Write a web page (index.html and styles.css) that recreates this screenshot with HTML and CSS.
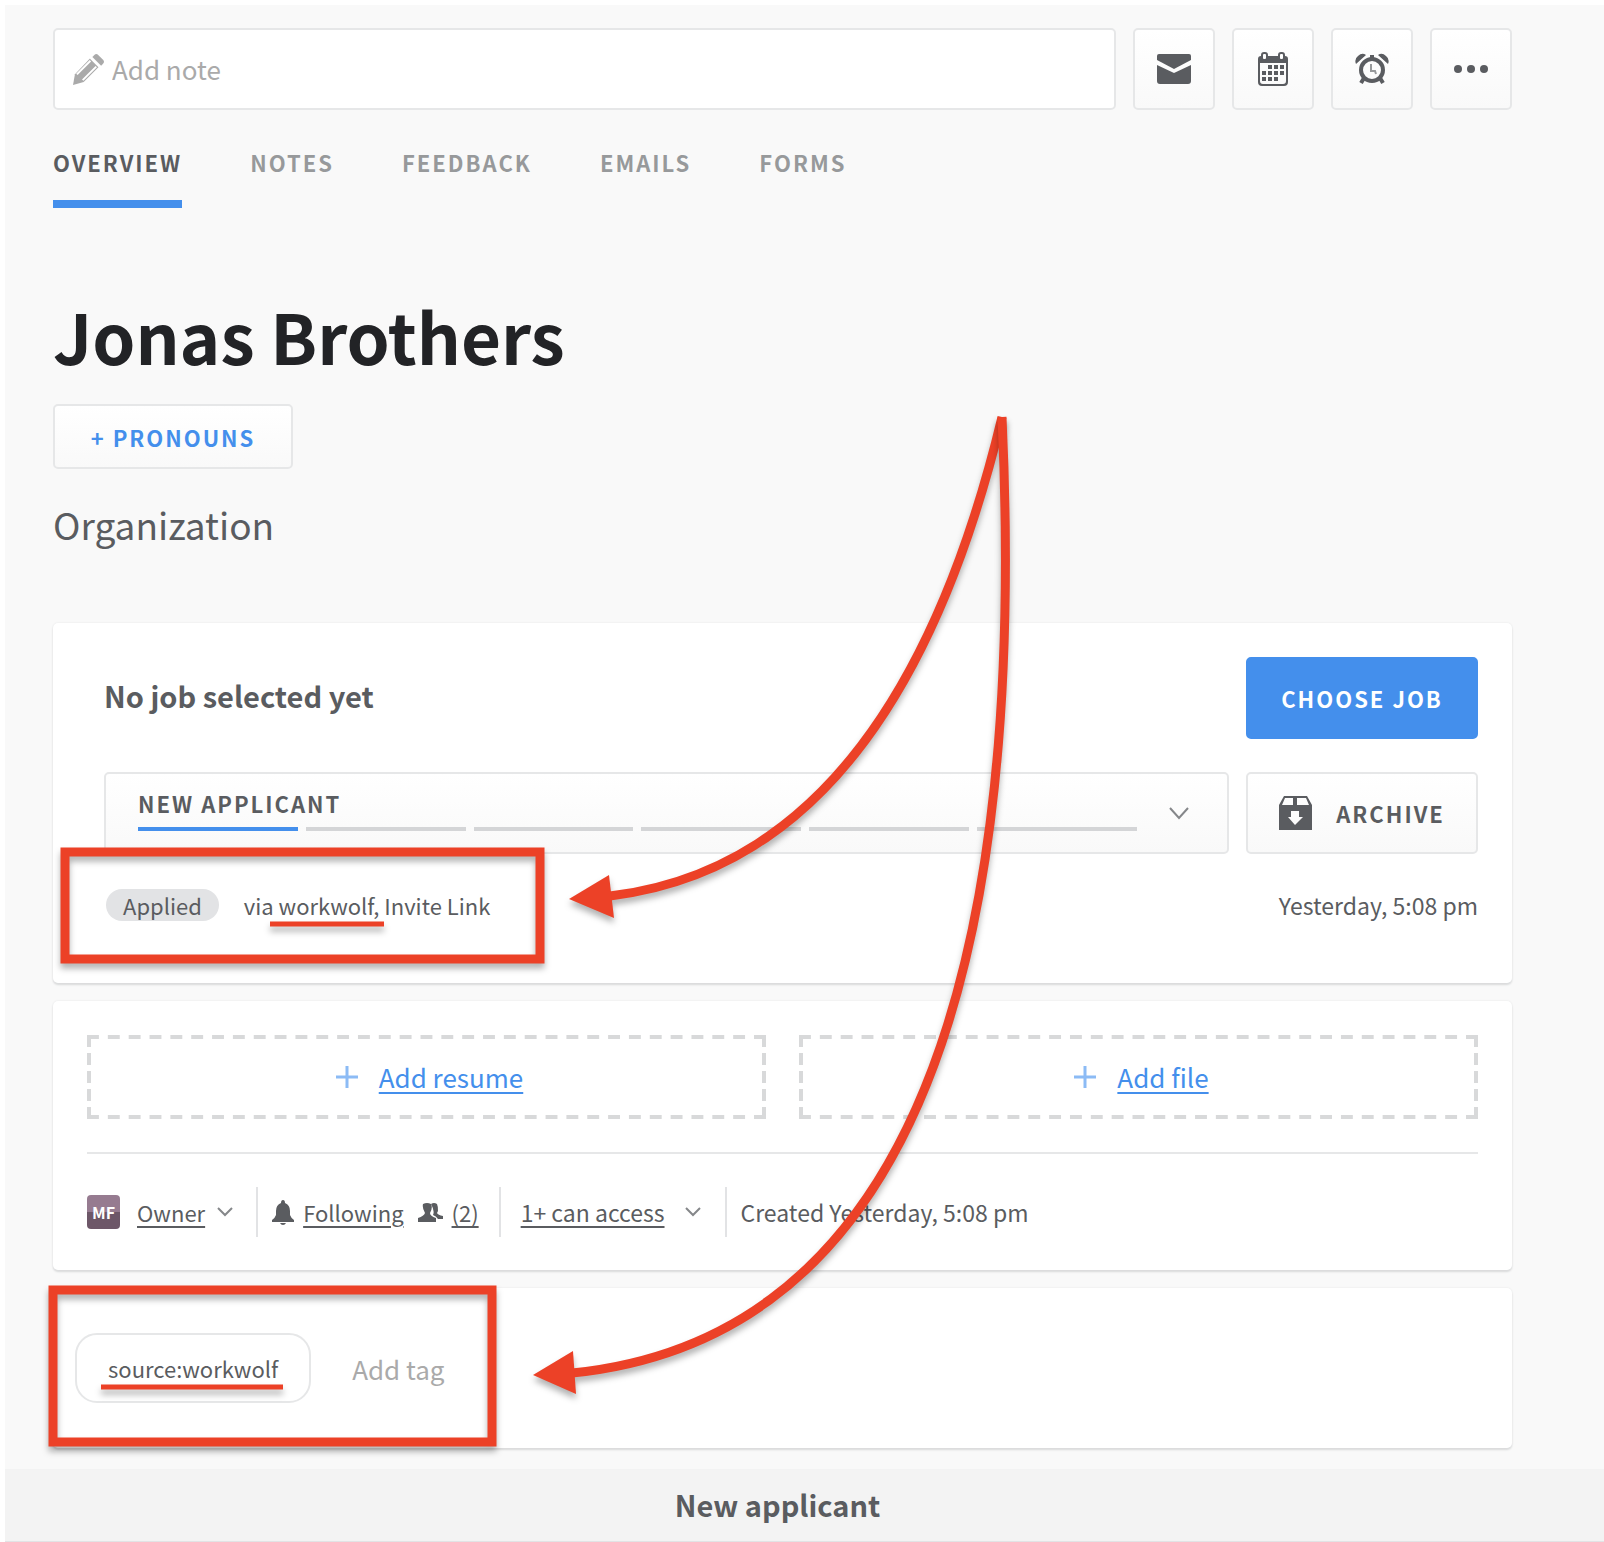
FILE: index.html
```html
<!DOCTYPE html>
<html lang="en">
<head>
    <meta charset="UTF-8">
    <meta name="viewport" content="width=device-width, initial-scale=1.0">
    <title>Jonas Brothers - Candidate Profile</title>
    <link rel="stylesheet" href="styles.css">
</head>
<body>
    <div class="page">
        <main class="profile">
            <div class="toolbar">
                <label class="note">
                    <svg class="pencil" viewBox="0 0 32 32" aria-hidden="true">
                        <path d="M0 32 L2 21 L18 4 L27 13 L11 29 Z" fill="#aaa"/>
                        <path d="M4 21 L18 7 M10 27 L24 13" stroke="#fff" stroke-width="2"/>
                        <path d="M18 4 L27 13" stroke="#fff" stroke-width="2"/>
                        <path d="M20 3 L22 1 Q24 -1 26 1 L31 6 Q33 8 31 10 L29 12 Z" fill="#aaa"/>
                    </svg>
                    <input type="text" placeholder="Add note" aria-label="Add note">
                </label>
                <button class="btn icon-btn" aria-label="Email">
                    <svg width="34" height="30" viewBox="0 0 34 30">
                        <path d="M0 2 Q0 0 2 0 H32 Q34 0 34 2 V6 L17 15 L0 6 Z"/>
                        <path d="M0 11 L17 19 L34 11 V27 Q34 30 31 30 H3 Q0 30 0 27 Z"/>
                    </svg>
                </button>
                <button class="btn icon-btn" aria-label="Calendar">
                    <svg width="30" height="34" viewBox="0 0 30 34">
                        <path fill-rule="evenodd" d="M3 4 H27 Q30 4 30 7 V30 Q30 34 26 34 H4 Q0 34 0 30 V7 Q0 4 3 4 Z M2 11 V29 Q2 32 5 32 H25 Q28 32 28 29 V11 Z"/>
                        <rect x="4" y="1" width="5" height="7" rx="2" fill="#fff" stroke="#5a5c60" stroke-width="2"/>
                        <rect x="21" y="1" width="5" height="7" rx="2" fill="#fff" stroke="#5a5c60" stroke-width="2"/>
                        <path d="M10 13h4v4h-4z M16 13h4v4h-4z M22 13h4v4h-4z M4 19h4v4h-4z M10 19h4v4h-4z M16 19h4v4h-4z M22 19h4v4h-4z M4 25h4v4h-4z M10 25h4v4h-4z M16 25h4v4h-4z"/>
                    </svg>
                </button>
                <button class="btn icon-btn" aria-label="Reminder">
                    <svg width="34" height="32" viewBox="0 0 34 32">
                        <circle cx="17" cy="17" r="11" fill="none" stroke="#5a5c60" stroke-width="4"/>
                        <path d="M1 11 Q-1 6 3 3 Q7 -1 11 2 Z M33 11 Q35 6 31 3 Q27 -1 23 2 Z M15 5 V2 H19 V5 Z"/>
                        <path d="M9 25 L6 30 M25 25 L28 30" stroke="#5a5c60" stroke-width="4"/>
                        <path d="M16 11 V18 H20 L21 21" fill="none" stroke="#97999b" stroke-width="2"/>
                    </svg>
                </button>
                <button class="btn icon-btn" aria-label="More">
                    <svg width="34" height="10" viewBox="0 0 34 10">
                        <circle cx="4" cy="5" r="4"/>
                        <circle cx="17" cy="5" r="4"/>
                        <circle cx="30" cy="5" r="4"/>
                    </svg>
                </button>
            </div>

            <nav class="tabs">
                <a href="#" class="active">OVERVIEW</a>
                <a href="#">NOTES</a>
                <a href="#">FEEDBACK</a>
                <a href="#">EMAILS</a>
                <a href="#">FORMS</a>
            </nav>

            <header class="person">
                <h1>Jonas Brothers</h1>
                <button class="btn pronouns">+ PRONOUNS</button>
                <p class="organization">Organization</p>
            </header>

            <section class="card job">
                <div class="job-row">
                    <h2>No job selected yet</h2>
                    <button class="btn primary">CHOOSE JOB</button>
                </div>
                <div class="job-row">
                    <button class="btn stage">
                        <span class="stage-main">
                            <span class="stage-name">NEW APPLICANT</span>
                            <span class="steps">
                                <span class="step done"></span>
                                <span class="step"></span>
                                <span class="step"></span>
                                <span class="step"></span>
                                <span class="step"></span>
                                <span class="step"></span>
                            </span>
                        </span>
                        <svg class="chevron" width="20" height="13" viewBox="0 0 20 13"><path d="M1 1 L10 11 L19 1"/></svg>
                    </button>
                    <button class="btn archive">
                        <svg width="33" height="34" viewBox="0 0 33 34">
                            <path fill-rule="evenodd" d="M5 0 H28 L33 9 V34 H0 V9 Z M6 2 L3 9 H14 V2 Z M18 2 V9 H30 L27 2 Z M12 15 V21 H9 L16 29 L24 21 H20 V15 Z"/>
                        </svg>
                        ARCHIVE
                    </button>
                </div>
                <div class="source-row">
                    <span class="pill">Applied</span>
                    <span>via workwolf, Invite Link</span>
                    <time>Yesterday, 5:08 pm</time>
                </div>
            </section>

            <section class="card files">
                <div class="drops">
                    <div class="drop">
                        <svg width="22" height="22" viewBox="0 0 22 22"><path d="M11 0 V22 M0 11 H22"/></svg>
                        <a href="#">Add resume</a>
                    </div>
                    <div class="drop">
                        <svg width="22" height="22" viewBox="0 0 22 22"><path d="M11 0 V22 M0 11 H22"/></svg>
                        <a href="#">Add file</a>
                    </div>
                </div>
                <div class="meta">
                    <div class="meta-item owner">
                        <span class="avatar">MF</span>
                        <a href="#">Owner</a>
                        <svg class="chevron" width="16" height="10" viewBox="0 0 16 10"><path d="M1 1 L8 8 L15 1"/></svg>
                    </div>
                    <div class="meta-item followers">
                        <svg width="22" height="25" viewBox="0 0 22 25">
                            <path d="M11 0 Q13 0 13 3 Q18 5 18 11 V15 Q19 18 22 20 V22 H0 V20 Q3 18 4 15 V11 Q4 5 9 3 Q9 0 11 0 Z M8 23 H14 Q13 25 11 25 Q9 25 8 23 Z"/>
                        </svg>
                        <a href="#">Following</a>
                        <svg class="people" width="25" height="19" viewBox="0 0 25 19">
                            <path d="M13 1 Q16 -1 19 1 Q20 3 20 8 L19 10 Q20 12 25 13 V16 H20 Q18 13 15 12 Q17 8 13 1 Z"/>
                            <path d="M5 1 Q9 -1 13 1 Q15 5 12 10 Q12 13 18 15 V19 H0 V15 Q6 13 7 10 Q4 5 5 1 Z"/>
                        </svg>
                        <a href="#">(2)</a>
                    </div>
                    <div class="meta-item access">
                        <a href="#">1+ can access</a>
                        <svg class="chevron" width="16" height="10" viewBox="0 0 16 10"><path d="M1 1 L8 8 L15 1"/></svg>
                    </div>
                    <div class="meta-item created">Created Yesterday, 5:08 pm</div>
                </div>
            </section>

            <section class="card tags">
                <span class="tag">source:workwolf</span>
                <input type="text" placeholder="Add tag" aria-label="Add tag">
            </section>
        </main>

        <footer class="stage-footer"><h2>New applicant</h2></footer>

        <!-- walkthrough marks -->
        <svg class="marks" width="1604" height="1542" viewBox="0 0 1604 1542" aria-hidden="true">
            <g class="mark">
                <path d="M1002 417 Q895 862 610 896"/>
                <path class="head" d="M569 899 L609 875 L614 918 Z"/>
            </g>
            <g class="mark">
                <path d="M1002 417 Q1044 1325 572 1373"/>
                <path class="head" d="M533 1375 L573 1351 L576 1394 Z"/>
            </g>
            <g class="mark">
                <rect x="65" y="852" width="475" height="107"/>
                <path class="line" d="M270 924 H384"/>
            </g>
            <g class="mark">
                <rect x="53" y="1290" width="439" height="152"/>
                <path class="line" d="M101 1387 H283"/>
            </g>
        </svg>
    </div>
</body>
</html>
```

FILE: styles.css
```css
* {
    box-sizing: border-box;
}

body {
    margin: 0;
    background: #fff;
    color: #5a5c60;
    font-family: "Noto Sans CJK SC", "Noto Sans", sans-serif;
    font-size: 22px;
    line-height: 32px;
}

h1, h2, p {
    margin: 0;
}

a {
    color: inherit;
}

svg {
    flex: none;
    fill: #5a5c60;
}

input, button {
    font: inherit;
    color: inherit;
}

input {
    border: none;
    outline: none;
    padding: 0;
    background: transparent;
}

input::placeholder {
    color: #aaa;
    opacity: 1;
}

.page {
    position: relative;
    margin: 5px 0 0 5px;
    background: #f9f9f9;
}

.profile {
    padding: 23px 92px 21px 48px;
}

.btn {
    display: flex;
    align-items: center;
    justify-content: center;
    height: 82px;
    padding: 0;
    border: 2px solid #e6e7e8;
    border-radius: 5px;
    background: linear-gradient(#fff, #f9f9f9);
    font-weight: bold;
    letter-spacing: 2px;
}

/* Toolbar */
.toolbar {
    display: flex;
    gap: 17px;
}

.note {
    display: flex;
    flex: 1;
    align-items: center;
    gap: 8px;
    height: 82px;
    padding: 0 18px;
    border: 2px solid #e6e7e8;
    border-radius: 5px;
    background: #fff;
    font-size: 26px;
}

.note input {
    flex: 1;
}

.pencil {
    width: 31px;
    height: 31px;
}

.icon-btn {
    width: 82px;
}

/* Tabs */
.tabs {
    display: flex;
    gap: 68px;
    margin-top: 36px;
    font-weight: bold;
    letter-spacing: 2px;
}

.tabs a {
    padding-bottom: 22px;
    border-bottom: 8px solid transparent;
    color: #97999b;
    text-decoration: none;
}

.tabs a.active {
    border-color: #448fec;
    color: #5a5c60;
}

/* Name block */
.person {
    padding: 77px 0 74px;
}

.person h1 {
    margin-bottom: 19px;
    color: #222326;
    font-size: 69px;
    line-height: 100px;
}

.pronouns {
    width: 240px;
    height: 65px;
    color: #448fec;
}

.organization {
    margin-top: 30px;
    font-size: 37px;
    line-height: 50px;
}

/* Cards */
.card {
    margin-bottom: 18px;
    border-radius: 5px;
    background: #fff;
    box-shadow: 0 0 2px #e3e4e5, 0 2px 2px #d8d9da;
}

h2 {
    font-size: 29px;
    line-height: 44px;
}

.job {
    padding: 34px 34px 62px 51px;
}

.job-row {
    display: flex;
    align-items: center;
    gap: 17px;
    margin-bottom: 33px;
}

.job-row h2 {
    flex: 1;
    padding-bottom: 6px;
}

.primary,
.archive {
    width: 232px;
}

.primary {
    border-color: #448fec;
    background: #448fec;
    color: #fff;
}

.archive {
    gap: 24px;
}

.stage {
    flex: 1;
    gap: 32px;
    padding: 0 38px 0 32px;
    text-align: left;
}

.stage-main {
    flex: 1;
    padding-bottom: 8px;
}

.stage-name {
    display: block;
}

.steps {
    display: flex;
    gap: 8px;
    margin-top: 8px;
}

.step {
    flex: 1;
    height: 4px;
    background: #d4d5d7;
}

.step.done {
    background: #448fec;
}

.chevron {
    fill: none;
    stroke: #85878a;
    stroke-width: 2;
}

.source-row {
    display: flex;
    align-items: center;
    gap: 25px;
    padding: 2px 0 0 2px;
}

.source-row time {
    margin-left: auto;
}

.source-row time,
.access,
.created {
    font-size: 23px;
}

.pill {
    padding: 0 17px;
    border-radius: 17px;
    background: #e2e3e5;
}

/* Files and meta */
.files {
    padding: 34px 34px 33px;
}

.drops {
    display: grid;
    grid-template-columns: 1fr 1fr;
    gap: 33px;
}

/* wide dashes, each side starts and ends on a full dash */
.drop {
    --dash-x: linear-gradient(90deg, #d8d9da 12px, transparent 12px);
    --dash-y: linear-gradient(#d8d9da 12px, transparent 12px);
    display: flex;
    align-items: center;
    justify-content: center;
    gap: 21px;
    height: 84px;
    padding-left: 6px;
    background:
        var(--dash-x) 0 0 / calc((100% - 12px) / 32) 4px repeat-x,
        var(--dash-x) 0 100% / calc((100% - 12px) / 32) 4px repeat-x,
        var(--dash-y) 0 0 / 4px 18px repeat-y,
        var(--dash-y) 100% 0 / 4px 18px repeat-y;
    color: #448fec;
    font-size: 26px;
}

.drop svg {
    stroke: #8cbbf5;
    stroke-width: 3;
}

.drop a,
.meta a {
    text-decoration-thickness: 2px;
    text-underline-offset: 4px;
}

.meta {
    display: flex;
    margin-top: 33px;
    padding-top: 33px;
    border-top: 2px solid #e6e7e8;
}

.meta-item {
    display: flex;
    align-items: center;
    height: 50px;
}

.meta-item + .meta-item {
    border-left: 2px solid #e2e3e5;
}

.owner {
    gap: 12px;
    padding-right: 23px;
}

.owner a {
    margin-left: 5px;
}

.followers {
    gap: 9px;
    padding: 0 20px 0 14px;
}

.people {
    margin-left: 5px;
}

.access {
    gap: 20px;
    padding: 0 24px 0 20px;
}

.created {
    padding-left: 14px;
}

.avatar {
    width: 33px;
    height: 34px;
    border-radius: 4px;
    background: linear-gradient(#967b90 50%, #6d5768 50%);
    color: #fff;
    font-size: 16px;
    font-weight: bold;
    line-height: 34px;
    text-align: center;
}

/* Tags */
.tags {
    display: flex;
    align-items: center;
    gap: 41px;
    margin-bottom: 0;
    padding: 45px 22px;
}

.tag {
    padding: 17px 31px;
    border: 2px solid #e6e7e8;
    border-radius: 22px;
}

.tags input {
    height: 38px;
    font-size: 26px;
}

.stage-footer {
    padding: 13px 54px 15px 0;
    border-bottom: 2px solid #e2e3e5;
    background: #f3f3f3;
    text-align: center;
}

/* Marks drawn over the page */
.marks {
    position: absolute;
    top: -5px;
    left: -5px;
    pointer-events: none;
}

.mark {
    fill: none;
    stroke: #ec4127;
    stroke-width: 9;
    filter: drop-shadow(0 5px 3px rgba(0, 0, 0, 0.3));
}

.mark .head {
    fill: #ec4127;
    stroke: none;
}

.mark .line {
    stroke-width: 5;
}
```
